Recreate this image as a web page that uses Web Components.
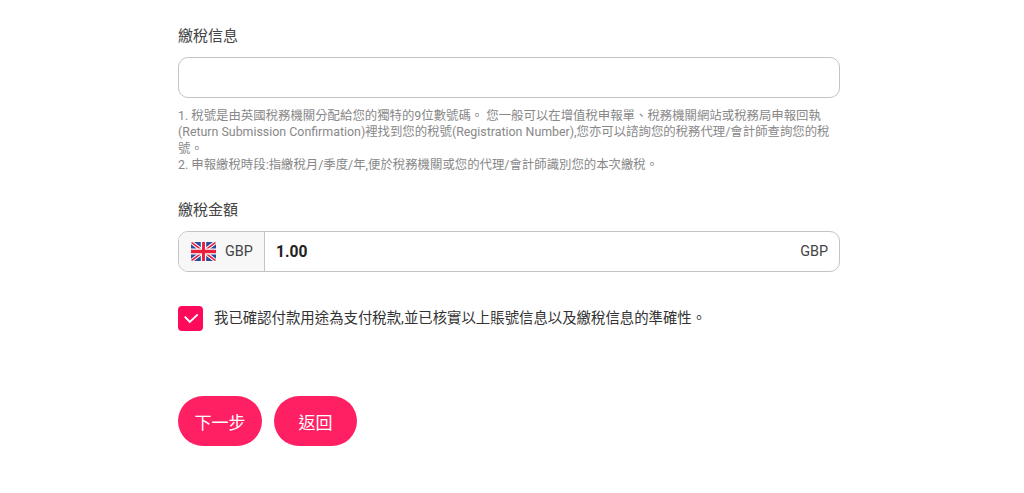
<!DOCTYPE html>
<html lang="zh-Hant">
<head>
<meta charset="utf-8">
<title>繳稅信息</title>
<style>
    html, body { margin: 0; padding: 0; background: #fff; }
    body { font-family: Roboto, "Noto Sans CJK TC", sans-serif; color: #333; height: 493px; overflow: hidden; }
</style>
</head>
<body>
<tax-form></tax-form>
<script>
class FormField extends HTMLElement {
    constructor() {
        super();
        this.attachShadow({ mode: 'open' });
        this.shadowRoot.innerHTML = `
            <style>
                :host { display: block; }
                .label {
                    font-size: 15px;
                    line-height: 22px;
                    color: #444;
                    margin-bottom: 10px;
                }
            </style>
            <div class="label">${this.getAttribute('label')}</div>
            <slot></slot>
        `;
    }
}
customElements.define('form-field', FormField);

class TextBox extends HTMLElement {
    constructor() {
        super();
        this.attachShadow({ mode: 'open' });
        this.shadowRoot.innerHTML = `
            <style>
                :host {
                    display: block;
                    height: 41px;
                    box-sizing: border-box;
                    border: 1px solid #c4c4c4;
                    border-radius: 10px;
                    background: #fff;
                }
            </style>
        `;
    }
}
customElements.define('text-box', TextBox);

class AmountBox extends HTMLElement {
    constructor() {
        super();
        this.attachShadow({ mode: 'open' });
        this.shadowRoot.innerHTML = `
            <style>
                :host {
                    display: flex;
                    align-items: stretch;
                    height: 41px;
                    box-sizing: border-box;
                    border: 1px solid #c4c4c4;
                    border-radius: 10px;
                    overflow: hidden;
                    font-size: 14.4px;
                    color: #444;
                }
                .currency {
                    display: flex;
                    align-items: center;
                    gap: 9px;
                    width: 86px;
                    box-sizing: border-box;
                    padding-left: 12px;
                    background: #f7f7f7;
                    border-right: 1px solid #c4c4c4;
                }
                svg { display: block; border-radius: 2px; }
                .value {
                    flex: 1;
                    display: flex;
                    align-items: center;
                    padding-left: 11px;
                    font-size: 15.6px;
                    font-weight: 700;
                    color: #222;
                }
                .unit {
                    display: flex;
                    align-items: center;
                    padding-right: 11px;
                }
            </style>
            <div class="currency">
                <svg width="25" height="19" viewBox="0 0 60 40" preserveAspectRatio="none">
                    <rect width="60" height="40" fill="#2a4a9c"/>
                    <path d="M0 0 60 40M60 0 0 40" stroke="#fff" stroke-width="8"/>
                    <path d="M0 0 60 40M60 0 0 40" stroke="#e8203c" stroke-width="3.5"/>
                    <path d="M30 0V40M0 20H60" stroke="#fff" stroke-width="13"/>
                    <path d="M30 0V40M0 20H60" stroke="#e8203c" stroke-width="7"/>
                </svg>
                <span>GBP</span>
            </div>
            <div class="value">1.00</div>
            <div class="unit">GBP</div>
        `;
    }
}
customElements.define('amount-box', AmountBox);

class CheckRow extends HTMLElement {
    constructor() {
        super();
        this.attachShadow({ mode: 'open' });
        this.shadowRoot.innerHTML = `
            <style>
                :host {
                    display: flex;
                    align-items: flex-start;
                    gap: 11px;
                    font-size: 14.4px;
                    line-height: 24px;
                    color: #333;
                }
                .box {
                    flex: none;
                    width: 25px;
                    height: 25px;
                    border-radius: 4px;
                    background: #ff0a5a;
                    display: flex;
                    align-items: center;
                    justify-content: center;
                }
                .text { padding-top: 1px; }
            </style>
            <div class="box">
                <svg width="15" height="11" viewBox="0 0 15 11"><path d="M1.8 3.6 6.8 9 14.8 1.5" fill="none" stroke="#fff" stroke-width="1.9"/></svg>
            </div>
            <div class="text"><slot></slot></div>
        `;
    }
}
customElements.define('check-row', CheckRow);

class PillButton extends HTMLElement {
    constructor() {
        super();
        this.attachShadow({ mode: 'open' });
        this.shadowRoot.innerHTML = `
            <style>
                :host {
                    display: flex;
                    align-items: center;
                    justify-content: center;
                    height: 50px;
                    min-width: 83px;
                    box-sizing: border-box;
                    padding: 0 16.5px;
                    border-radius: 25px;
                    background: #ff2063;
                    color: #fff;
                    font-size: 17px;
                }
            </style>
            <slot></slot>
        `;
    }
}
customElements.define('pill-button', PillButton);

class TaxForm extends HTMLElement {
    constructor() {
        super();
        this.attachShadow({ mode: 'open' });
        this.shadowRoot.innerHTML = `
            <style>
                :host {
                    display: block;
                    width: 662px;
                    margin-left: 178px;
                    padding-top: 25px;
                }
                .hint {
                    font-size: 12.4px;
                    line-height: 16.25px;
                    color: #888;
                    margin-top: 10px;
                    margin-bottom: 26px;
                }
                check-row { margin-top: 34px; }
                .actions {
                    display: flex;
                    gap: 12px;
                    margin-top: 65px;
                }
            </style>
            <form-field label="繳稅信息">
                <text-box></text-box>
                <div class="hint">1. 稅號是由英國稅務機關分配給您的獨特的9位數號碼。 您一般可以在增值稅申報單、稅務機關網站或稅務局申報回執(Return Submission Confirmation)裡找到您的稅號(Registration Number),您亦可以諮詢您的稅務代理/會計師查詢您的稅號。<br>2. 申報繳稅時段:指繳稅月/季度/年,便於稅務機關或您的代理/會計師識別您的本次繳稅。</div>
            </form-field>
            <form-field label="繳稅金額">
                <amount-box></amount-box>
            </form-field>
            <check-row>我已確認付款用途為支付稅款,並已核實以上賬號信息以及繳稅信息的準確性。</check-row>
            <div class="actions">
                <pill-button>下一步</pill-button>
                <pill-button>返回</pill-button>
            </div>
        `;
    }
}
customElements.define('tax-form', TaxForm);
</script>
</body>
</html>
